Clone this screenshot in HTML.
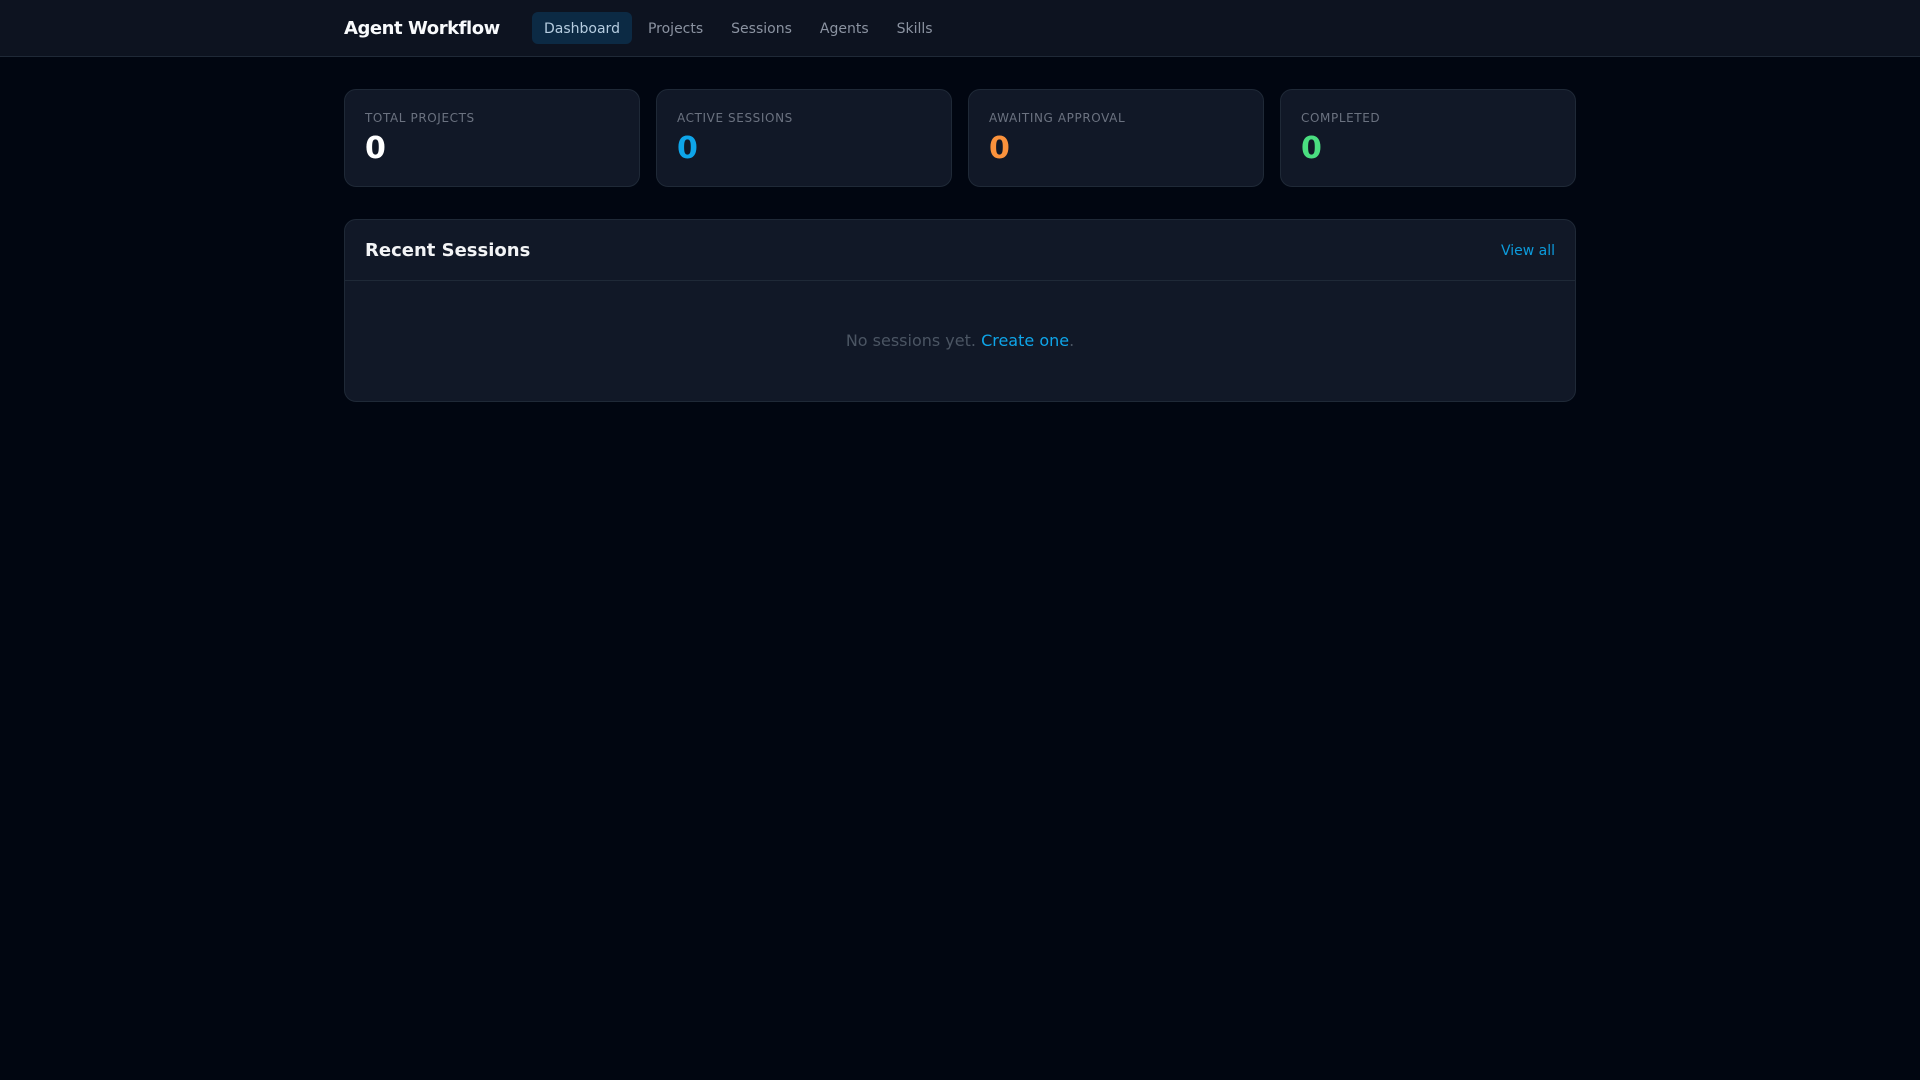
<!DOCTYPE html>
<html lang="en">
<head>
<meta charset="utf-8">
<title>Agent Workflow</title>
<style>
*{box-sizing:border-box;margin:0;padding:0}
html,body{width:1920px;height:1080px;overflow:hidden;background:#010611}
body{font-family:"DejaVu Sans",sans-serif;font-size:16px;line-height:24px;color:#f3f4f6;background:#010611}
a{text-decoration:none;color:inherit}
header{height:57px;background:#0d1320;border-bottom:1px solid #1f2937}
.wrap{width:1280px;margin:0 auto;padding:0 24px}
.bar{display:flex;align-items:center;height:56px}
.logo{font-size:18px;letter-spacing:-.45px;line-height:28px;font-weight:700;color:#f8fafc;width:156px;margin-right:32px;position:relative;top:.5px;white-space:nowrap}
nav{display:flex;gap:4px}
nav a{display:block;font-size:14px;line-height:20px;padding:7px 12px 5px;border-radius:6px;color:#8b93a1}
nav a.on{background:#0c2a44;color:#b6cde0}
main.wrap{padding-top:32px}
.stats{display:grid;grid-template-columns:repeat(4,1fr);gap:16px;margin-bottom:32px}
.card{background:#111827;border:1px solid #1f2937;border-radius:12px}
.stat{padding:20px;height:98px}
.lab{font-size:12px;line-height:16px;letter-spacing:.6px;text-transform:uppercase;color:#6b7280;margin-bottom:5px}
.val{font-size:30px;line-height:36px;font-weight:700}
.ph{display:flex;justify-content:space-between;align-items:center;padding:1px 20px 0;height:61px;border-bottom:1px solid #1f2937}
.ph h2{font-size:18px;line-height:28px;font-weight:600;color:#f3f4f6}
.ph a{font-size:14px;line-height:20px;color:#0c9bdc}
.empty{height:120px;display:flex;align-items:center;justify-content:center;color:#4b5563}
.empty a{color:#0ea5e9}
.empty span{white-space:pre}
</style>
</head>
<body>
<header>
<div class="wrap bar">
<a class="logo" href="#">Agent Workflow</a>
<nav>
<a class="on" href="#">Dashboard</a>
<a href="#">Projects</a>
<a href="#">Sessions</a>
<a href="#">Agents</a>
<a href="#">Skills</a>
</nav>
</div>
</header>
<main class="wrap">
<div class="stats">
<div class="card stat"><div class="lab">Total Projects</div><div class="val" style="color:#fff">0</div></div>
<div class="card stat"><div class="lab">Active Sessions</div><div class="val" style="color:#0ea5e9">0</div></div>
<div class="card stat"><div class="lab">Awaiting Approval</div><div class="val" style="color:#fb923c">0</div></div>
<div class="card stat"><div class="lab">Completed</div><div class="val" style="color:#4ade80">0</div></div>
</div>
<div class="card">
<div class="ph"><h2>Recent Sessions</h2><a href="#">View all</a></div>
<div class="empty"><span>No sessions yet. <a href="#">Create one</a>.</span></div>
</div>
</main>
</body>
</html>
